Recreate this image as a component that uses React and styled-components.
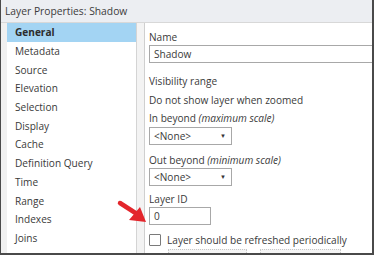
import React from "react";
import styled, { createGlobalStyle } from "styled-components";

const Global = createGlobalStyle`
  html, body { margin: 0; padding: 0; background: #ffffff; }
  body { font-family: "Open Sans", "Noto Sans", sans-serif; }
`;

const Window = styled.div`
  position: relative;
  width: 374px;
  height: 255px;
  box-sizing: border-box;
  border-left: 1px solid #4a4a4a;
  border-right: 2px solid #4a4a4a;
  border-bottom: 2px solid #4a4a4a;
  background: #f0f0f0;
  display: flex;
  flex-direction: column;
  overflow: hidden;
  color: #3a3a3a;
  font-size: 10.1px;
`;

const TitleBar = styled.div`
  height: 22px;
  flex: none;
  display: flex;
  align-items: center;
  padding-left: 4px;
  background: #eceef2;
  border-bottom: 1px solid #d8d8d8;
  font-size: 10.3px;
  color: #3c3c3c;
`;

const Body = styled.div`
  flex: 1;
  display: flex;
  padding-left: 6px;
  min-height: 0;
`;

const List = styled.div`
  width: 129px;
  flex: none;
  background: #ffffff;
  border-right: 1px solid #d4d4d4;
  display: flex;
  flex-direction: column;
`;

const Item = styled.div`
  height: 18.7px;
  flex: none;
  display: flex;
  align-items: center;
  padding-left: 8px;
  background: ${(p) => (p.$active ? "#a3d4f3" : "transparent")};
  font-weight: ${(p) => (p.$active ? 700 : 400)};
  color: ${(p) => (p.$active ? "#2c2c2c" : "#3a3a3a")};
  white-space: nowrap;
`;

const Gap = styled.div`
  width: 7px;
  flex: none;
  background: #f3f3f3;
`;

const Content = styled.div`
  flex: 1;
  background: #ffffff;
  border-left: 1px solid #cfcfcf;
  padding: 6px 0 0 4px;
  display: flex;
  flex-direction: column;
  align-items: flex-start;
  overflow: hidden;
`;

const Label = styled.div`
  height: 16px;
  line-height: 16px;
  margin-top: ${(p) => p.$mt || 0}px;
  white-space: nowrap;
  em { font-style: italic; }
`;

const TextBox = styled.div`
  width: ${(p) => p.$w}px;
  height: 18px;
  box-sizing: border-box;
  border: 1px solid #a8a8a8;
  margin-top: ${(p) => p.$mt || 0}px;
  padding-left: 4px;
  display: flex;
  align-items: center;
  background: #fff;
  flex: none;
`;

const Select = styled(TextBox)`
  justify-content: space-between;
  padding-right: 5px;
`;

const Caret = styled.span`
  font-size: 6px;
  color: #333;
`;

const CheckRow = styled.div`
  display: flex;
  align-items: center;
  gap: 6px;
  margin-top: ${(p) => p.$mt}px;
  height: 14px;
  white-space: nowrap;
  flex: none;
`;

const Box = styled.div`
  width: 12px;
  height: 12px;
  box-sizing: border-box;
  border: 1px solid #7a7a7a;
  border-radius: 1px;
  background: #fff;
`;

const DisabledRow = styled.div`
  display: flex;
  gap: 13px;
  margin-top: 2px;
  padding-left: 19px;
  flex: none;
`;

const Disabled = styled.div`
  width: ${(p) => p.$w}px;
  height: 10px;
  box-sizing: border-box;
  border: 1px dotted #c8c8c8;
  background: #f4f4f4;
`;

const ArrowSvg = styled.svg`
  position: absolute;
  left: 112px;
  top: 195px;
  width: 40px;
  height: 34px;
`;

const items = [
  "General",
  "Metadata",
  "Source",
  "Elevation",
  "Selection",
  "Display",
  "Cache",
  "Definition Query",
  "Time",
  "Range",
  "Indexes",
  "Joins",
  "Relates",
];

export default function App() {
  return (
    <>
      <Global />
      <Window>
        <TitleBar>Layer Properties: Shadow</TitleBar>
        <Body>
          <List>
            {items.map((t, i) => (
              <Item key={t} $active={i === 0}>
                {t}
              </Item>
            ))}
          </List>
          <Gap />
          <Content>
            <Label>Name</Label>
            <TextBox $w={240}>Shadow</TextBox>
            <Label $mt={10}>Visibility range</Label>
            <Label $mt={3}>Do not show layer when zoomed</Label>
            <Label $mt={2}>
              In beyond <em>(maximum scale)</em>
            </Label>
            <Select $w={83} $mt={1}>
              <span>&lt;None&gt;</span>
              <Caret>▼</Caret>
            </Select>
            <Label $mt={7}>
              Out beyond <em>(minimum scale)</em>
            </Label>
            <Select $w={83} $mt={0}>
              <span>&lt;None&gt;</span>
              <Caret>▼</Caret>
            </Select>
            <Label $mt={5}>Layer ID</Label>
            <TextBox $w={62}>0</TextBox>
            <CheckRow $mt={8}>
              <Box />
              <span>Layer should be refreshed periodically</span>
            </CheckRow>
            <DisabledRow>
              <Disabled $w={79} />
              <Disabled $w={81} />
            </DisabledRow>
          </Content>
        </Body>
        <ArrowSvg viewBox="0 0 40 34">
          <line x1="7" y1="8" x2="24" y2="19" stroke="#e3262c" strokeWidth="4.5" strokeLinecap="round" />
          <polygon points="33,27 16,25 27,12" fill="#e3262c" />
        </ArrowSvg>
      </Window>
    </>
  );
}
